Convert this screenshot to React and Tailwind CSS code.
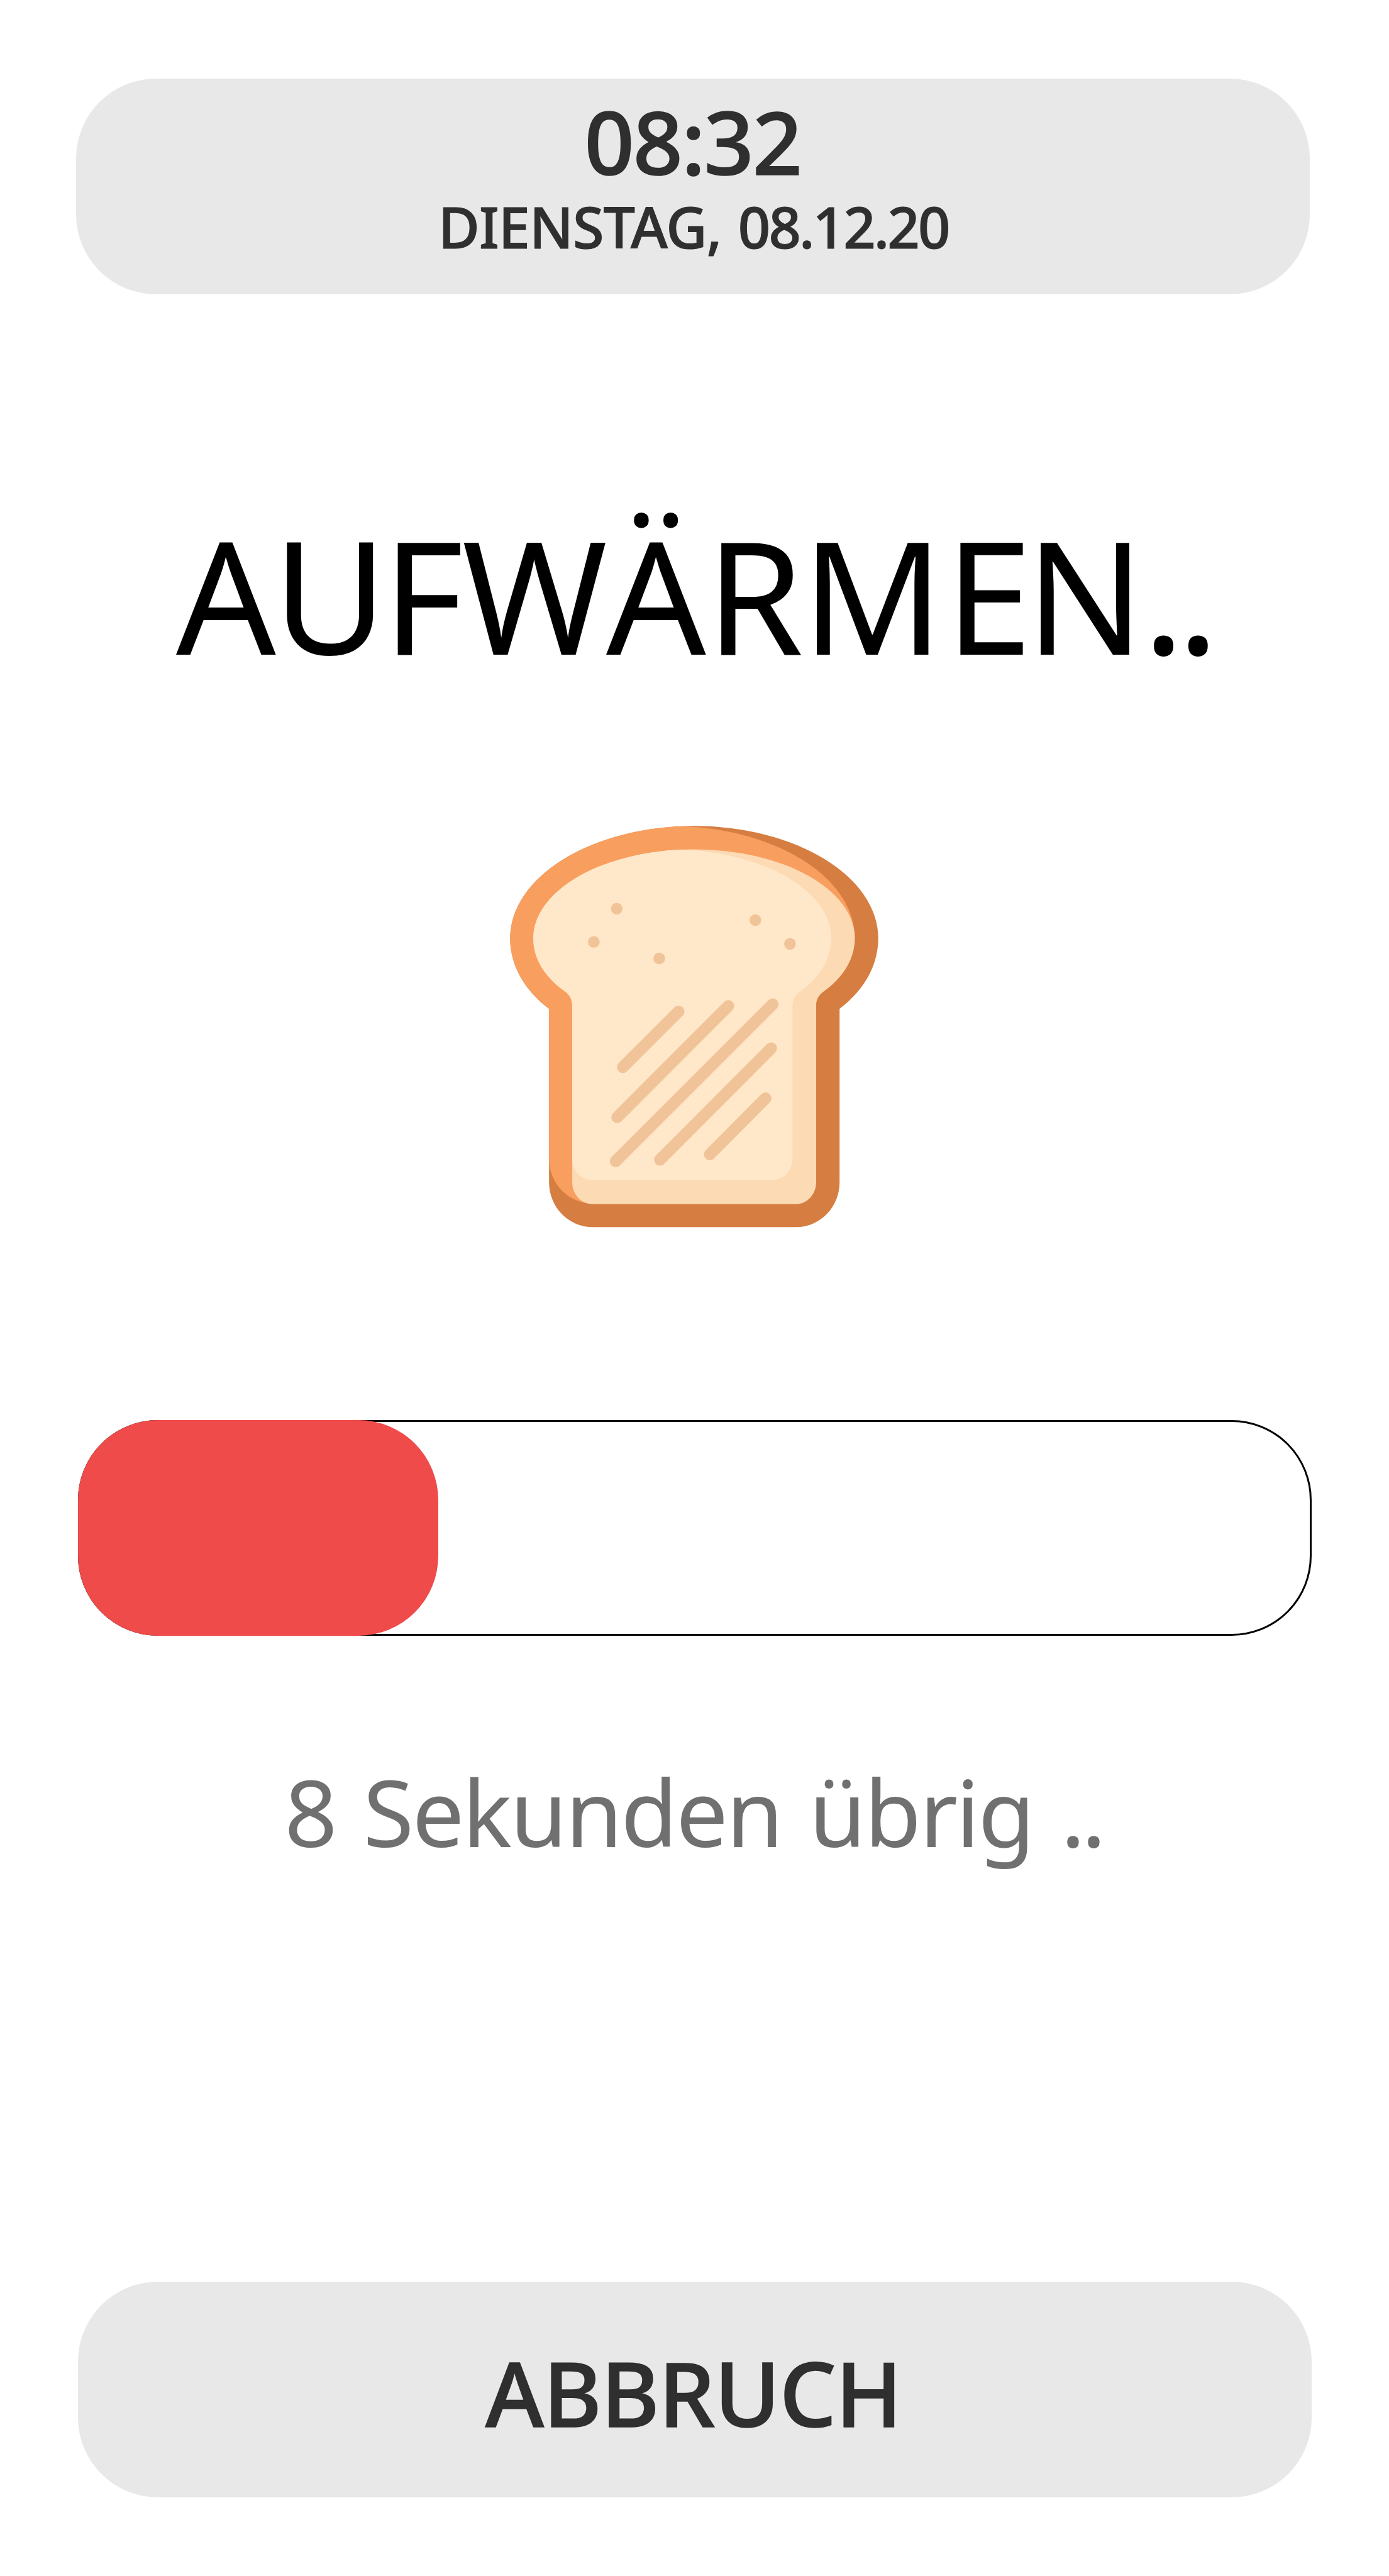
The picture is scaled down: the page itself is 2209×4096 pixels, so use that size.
const LINES = [
  [460.5, 504.8, 320.8, 644.6],
  [585.5, 491, 306.8, 770],
  [696.4, 486.9, 302.9, 880.2],
  [692.6, 597.1, 413.9, 876.7],
  [678.6, 722.5, 538.9, 863],
];

const CRUMBS = [
  [305.5, 247.2],
  [248.1, 330.6],
  [412, 371.9],
  [653.1, 275.8],
  [739.8, 335.4],
];

// Optical tracking of the headline, letter by letter
const HEADLINE = [
  ["A", "tracking-[-5px]"],
  ["U", "tracking-[-7.2px]"],
  ["F", "tracking-[-2.9px]"],
  ["W", "tracking-[-2.1px]"],
  ["Ä", "tracking-[0.2px]"],
  ["R", "tracking-[-2.8px]"],
  ["M", "tracking-[2.7px]"],
  ["E", "tracking-[-10.5px]"],
  ["N", "tracking-[-2.7px]"],
  ["..", "tracking-[-12px]"],
];

function Toast() {
  return (
    <svg viewBox="0 0 1000 1080" className="h-[685.2px] w-[634.4px]" role="img" aria-label="Toast">
      <g transform="scale(0.637755 0.688776)">
        {/* crust, shaded then lit */}
        <path
          fill="#d67d41"
          d="M213 723C115 655 60 563 60 467A723.5 409 0 0 1 783.5 58A723.5 409 0 0 1 1507 467C1507 563 1453 655 1355 723V1355A172 163 0 0 1 1183 1518H385A172 163 0 0 1 213 1355Z"
        />
        <path
          fill="#f89f60"
          d="M213 723C115 655 60 563 60 467A723.5 409 0 0 1 737.5 58.8A723.5 409 0 0 1 1415 467L1200 650V1432H385A172 163 0 0 1 213 1269Z"
        />
        {/* crumb, shaded then lit */}
        <path
          fill="#fcdab4"
          d="M304 712C304 690 294 672 277 661C195 608 151 540 151 467A632 324 0 0 1 1415 467C1415 540 1370 610 1290 662C1272 675 1263 690 1263 712V1355A79 79 0 0 1 1184 1434H383A79 79 0 0 1 304 1355Z"
        />
        <path
          fill="#ffe8c9"
          d="M304 712C304 690 294 672 277 661C195 608 151 540 151 467A632 324 0 0 1 737 143.8A632 324 0 0 1 1322 467C1322 540 1277 610 1198 662C1180 675 1170 690 1170 712V1269A79 79 0 0 1 1091 1347H383A79 79 0 0 1 304 1269Z"
        />
      </g>
      <g stroke="#f1c398" strokeWidth="29.5" strokeLinecap="round">
        {LINES.map(([x1, y1, x2, y2]) => (
          <line key={x1} x1={x1} y1={y1} x2={x2} y2={y2} />
        ))}
      </g>
      <g fill="#f1c398">
        {CRUMBS.map(([cx, cy]) => (
          <circle key={cx} cx={cx} cy={cy} r="14.7" />
        ))}
      </g>
    </svg>
  );
}

export default function App() {
  return (
    <main className="flex h-[4096px] w-[2209px] flex-col overflow-hidden bg-white font-['Noto_Sans','Open_Sans',sans-serif] whitespace-nowrap">
      <header className="mt-[125px] ml-[121px] h-[343.3px] w-[1962px] shrink-0 rounded-[127px] bg-[#e8e8e8] pt-[29.6px] font-medium text-[#2f2f2f]">
        <div className="pl-[808.5px] text-[138.5px] leading-[140px] tracking-[-2px] [-webkit-text-stroke:1.6px_#2f2f2f]">
          08:32
        </div>
        <div className="mt-[20.5px] pl-[576px] text-[90px] leading-[90px] tracking-[-0.9px] [-webkit-text-stroke:1.1px_#2f2f2f]">
          DIENSTAG,<span className="tracking-[3px]"> </span>
          <span className="tracking-[-2.9px]">08.12.20</span>
        </div>
      </header>

      <h1 className="mt-[351.9px] pl-[280px] text-[248.7px] leading-[250px] font-normal text-black">
        {HEADLINE.map(([glyph, tracking]) => (
          <span key={glyph} className={tracking}>
            {glyph}
          </span>
        ))}
      </h1>

      <div className="mt-[217.7px] ml-[786.7px] h-[685.2px] w-[634.4px]">
        <Toast />
      </div>

      <div className="mt-[284.9px] ml-[124px] grid h-[343px] w-[1962px] shrink-0">
        <div className="col-start-1 row-start-1 rounded-[127px] border-[3px] border-black" />
        <div className="col-start-1 row-start-1 w-[573px] rounded-[127px] bg-[#ef4b4a]" />
      </div>

      <p className="mt-[204.1px] pl-[452.5px] text-[147px] leading-[150px] tracking-[-2.8px] text-[#707070] [word-spacing:8.3px]">
        8 Sekunden übrig <span className="tracking-[-6.4px]">..</span>
      </p>

      <button
        type="button"
        className="mt-[673px] ml-[124px] flex h-[343.3px] w-[1962px] shrink-0 items-start rounded-[127px] bg-[#e8e8e8] pt-[106px] pl-[648px] text-[142px] leading-[140px] font-medium tracking-[-1.1px] text-[#2f2f2f] [-webkit-text-stroke:1.6px_#2f2f2f]"
      >
        ABBRUCH
      </button>
    </main>
  );
}
